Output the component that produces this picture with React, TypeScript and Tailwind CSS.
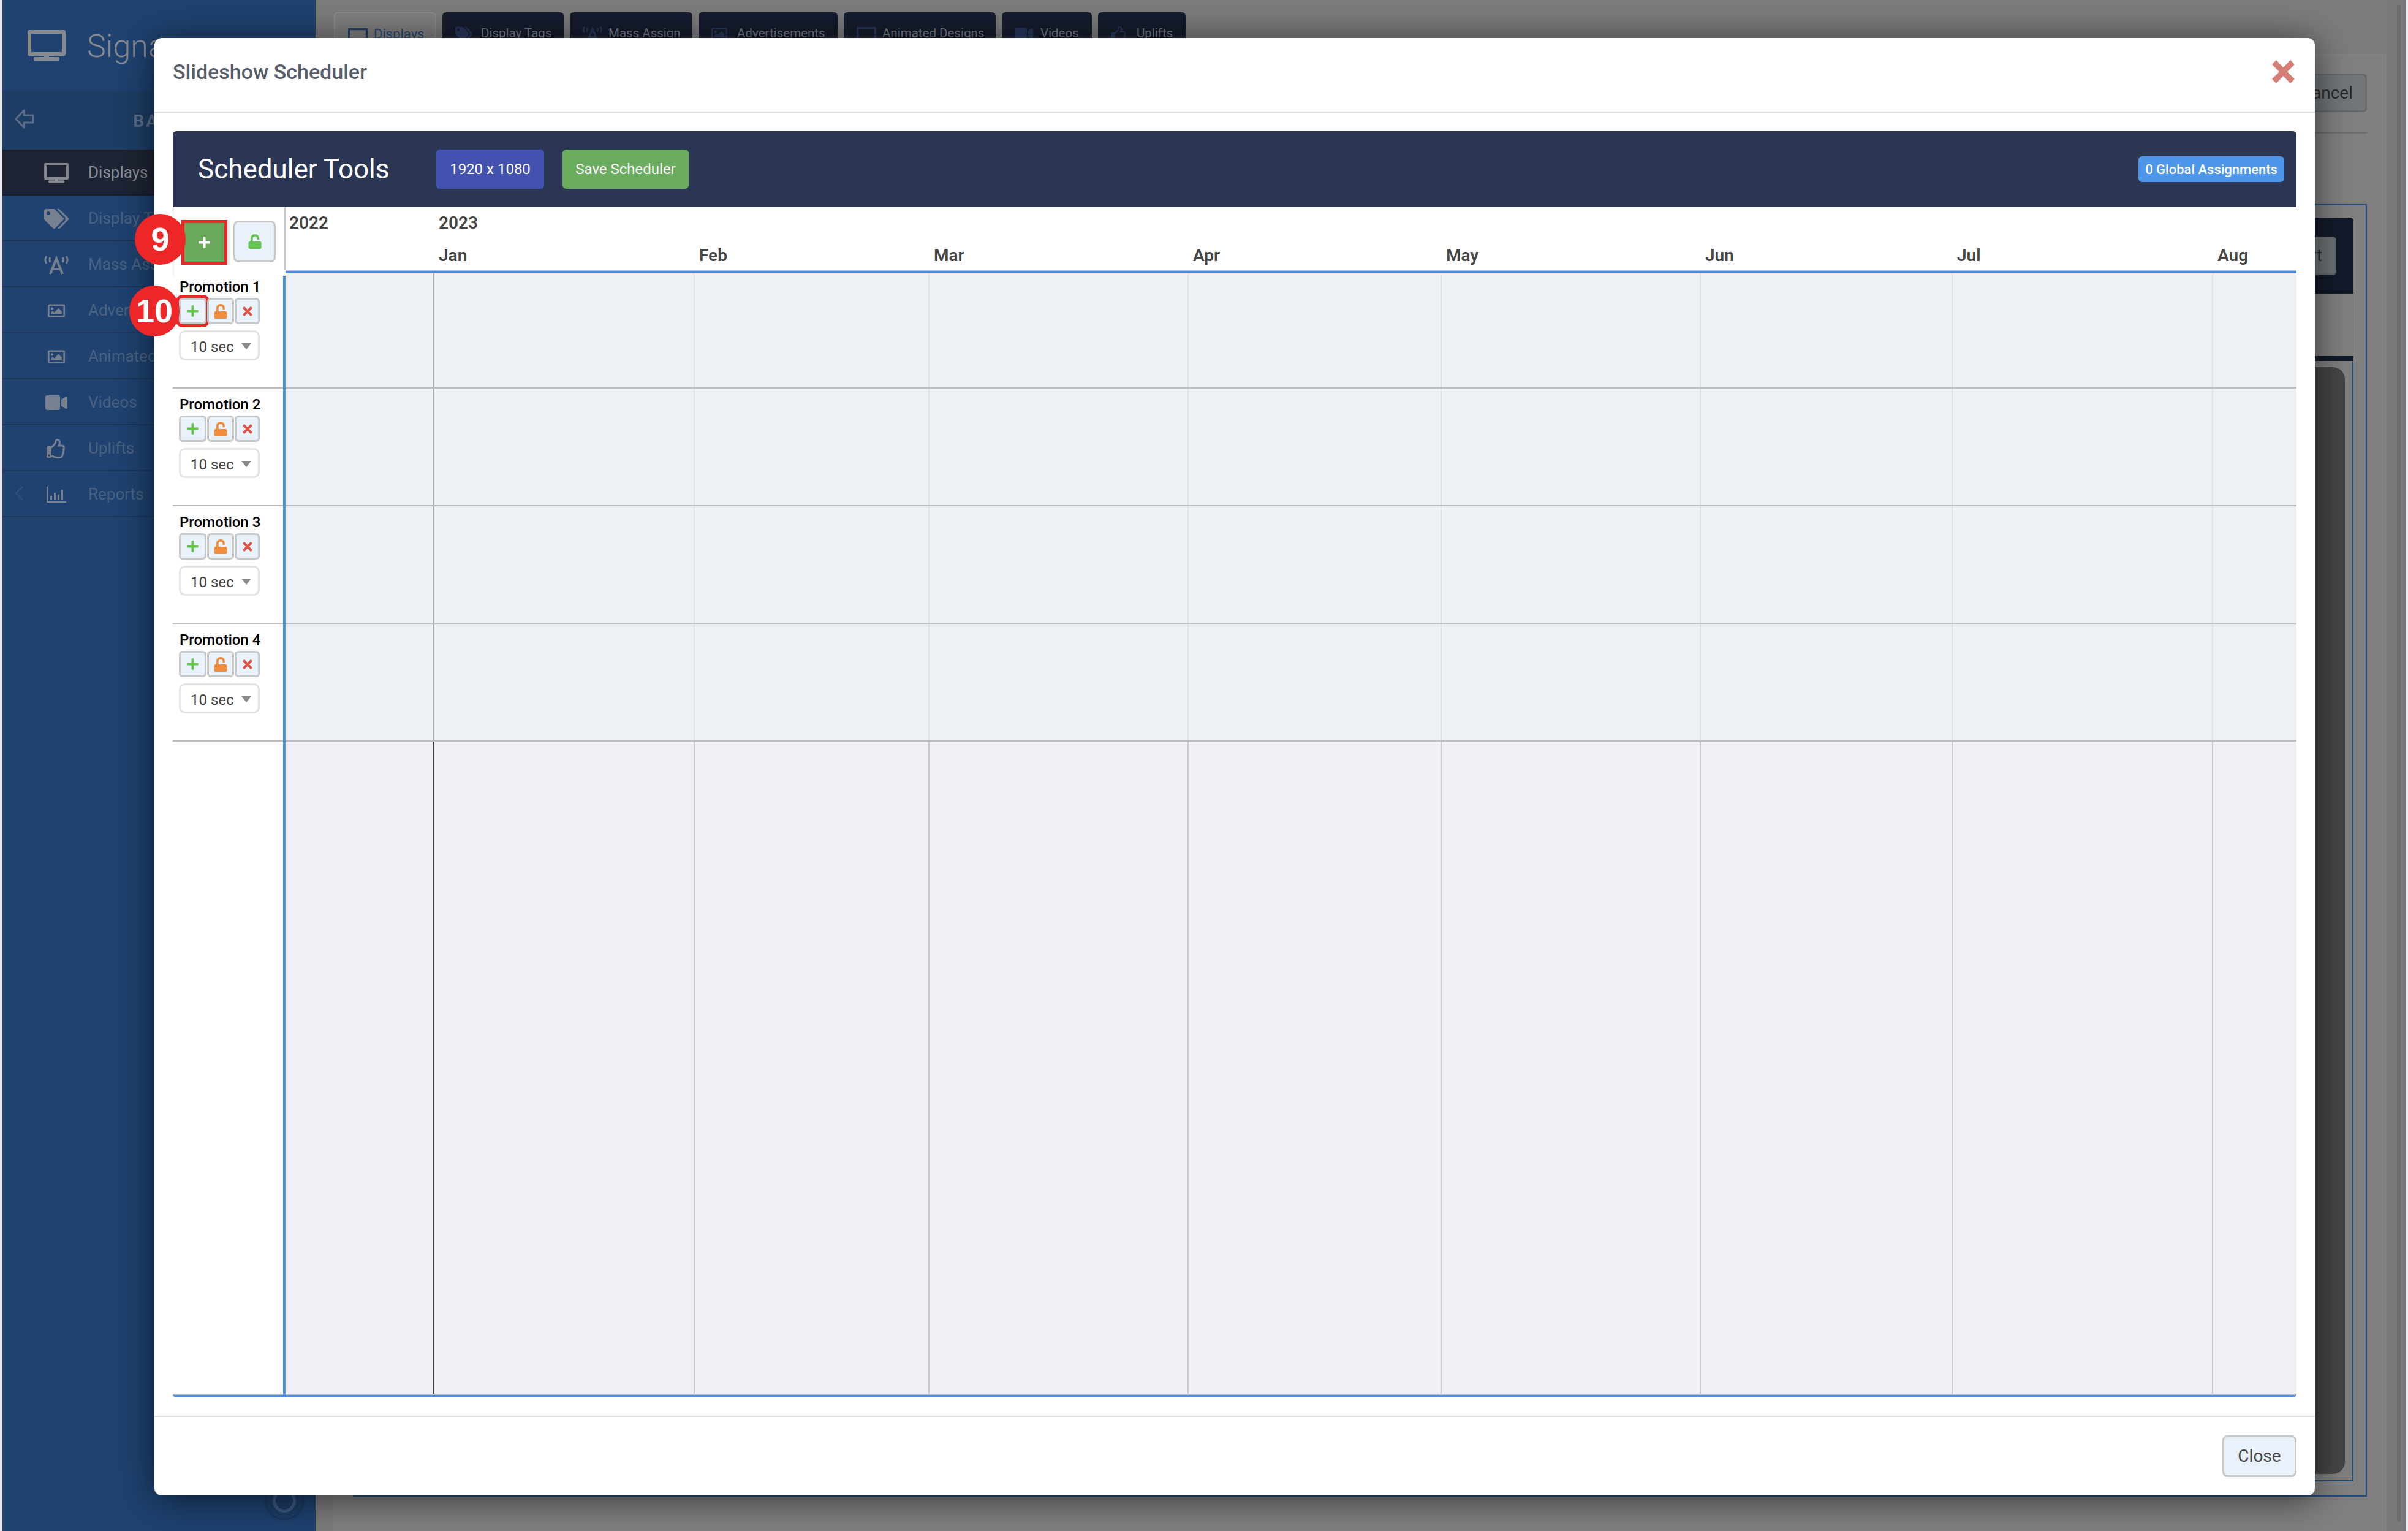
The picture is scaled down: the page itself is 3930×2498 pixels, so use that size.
import { FaPlus, FaUnlock, FaTimes, FaTags, FaRegImage, FaVideo, FaRegThumbsUp } from "react-icons/fa"

const gridCols = "grid grid-cols-[241px_425px_383px_423px_413px_423px_411px_425px_138px]"

const rows = [
  { name: "Promotion 1", leftH: "h-[184px]", rightH: "h-[188px]" },
  { name: "Promotion 2", leftH: "h-[192px]", rightH: "h-[192px]" },
  { name: "Promotion 3", leftH: "h-[192px]", rightH: "h-[192px]" },
  { name: "Promotion 4", leftH: "h-[192px]", rightH: "h-[192px]" },
]

const months = ["Jan", "Feb", "Mar", "Apr", "May", "Jun", "Jul", "Aug"]
const cells = [0, 1, 2, 3, 4, 5, 6, 7, 8]

function Monitor({ className }: { className?: string }) {
  return (
    <svg viewBox="0 0 62 50" className={className} fill="currentColor">
      <path fillRule="evenodd" d="M3 0h56a3 3 0 0 1 3 3v36a3 3 0 0 1-3 3H3a3 3 0 0 1-3-3V3a3 3 0 0 1 3-3zm3 6v30h50V6z" />
      <rect x="27" y="41" width="8" height="5" />
      <rect x="10" y="44" width="42" height="6" rx="3" />
    </svg>
  )
}

function Antenna({ className }: { className?: string }) {
  return (
    <svg viewBox="0 0 40 32" className={className} fill="none" stroke="currentColor">
      <path d="M4 2c-3 4-3 8 0 12M10 4c-1.500 2.500-1.500 5 0 8M36 2c3 4 3 8 0 12M30 4c1.500 2.500 1.500 5 0 8" strokeWidth="3" />
      <path d="M10 31l10-25 10 25M14 23h12" strokeWidth="4" />
    </svg>
  )
}

function BarChart({ className }: { className?: string }) {
  return (
    <svg viewBox="0 0 32 26" className={className} fill="currentColor">
      <path d="M0 0h2v24h30v2H0z" />
      <rect x="6" y="15" width="3" height="7" />
      <rect x="12" y="10" width="3" height="12" />
      <rect x="18" y="13" width="3" height="9" />
      <rect x="24" y="5" width="3" height="17" />
    </svg>
  )
}

const navItems = [
  { label: "Displays", icon: <Monitor className="w-[40px] h-[32px]" /> },
  { label: "Display Tags", icon: <FaTags className="w-[40px] h-[32px]" /> },
  { label: "Mass Assign", icon: <Antenna className="w-[40px] h-[32px]" /> },
  { label: "Advertisements", icon: <FaRegImage className="w-[32px] h-[28px] mx-[4px]" /> },
  { label: "Animated Designs", icon: <FaRegImage className="w-[32px] h-[28px] mx-[4px]" /> },
  { label: "Videos", icon: <FaVideo className="w-[36px] h-[32px] mx-[2px]" /> },
  { label: "Uplifts", icon: <FaRegThumbsUp className="w-[32px] h-[32px] mx-[4px]" /> },
  { label: "Reports", icon: <BarChart className="w-[32px] h-[26px] mx-[4px]" /> },
]

const tabs = [
  { label: "Displays", w: "w-[167px]", icon: <Monitor className="w-[32px] h-[32px]" /> },
  { label: "Display Tags", w: "w-[198px]", icon: <FaTags className="w-[28px] h-[28px]" /> },
  { label: "Mass Assign", w: "w-[200px]", icon: <Antenna className="w-[32px] h-[28px]" /> },
  { label: "Advertisements", w: "w-[227px]", icon: <FaRegImage className="w-[26px] h-[28px]" /> },
  { label: "Animated Designs", w: "w-[248px]", icon: <Monitor className="w-[32px] h-[32px]" /> },
  { label: "Videos", w: "w-[147px]", icon: <FaVideo className="w-[30px] h-[28px]" /> },
  { label: "Uplifts", w: "w-[143px]", icon: <FaRegThumbsUp className="w-[26px] h-[30px]" /> },
]

function Sidebar() {
  return (
    <div className="relative w-[511px] shrink-0 bg-[#1f4270] flex flex-col">
      <div className="h-[148px] flex items-center pl-[41px] gap-[35px] text-[#868a8e]">
        <Monitor className="w-[62px] h-[50px]" />
        <span className="pt-[3px] text-[52px] font-light">Signage</span>
      </div>
      <div className="relative h-[96px] pt-[3px] bg-[#1d3d64] flex items-center justify-center text-[#5d6f88] text-[28px] font-bold tracking-[3px]">
        <svg viewBox="0 0 32 32" className="absolute left-[20px] top-[30px] w-[32px] h-[32px]" fill="none" stroke="currentColor" strokeWidth="3" strokeLinejoin="round">
          <path d="M2 16L15 2v8h15v12H15v8z" />
        </svg>
        BACK
      </div>
      {navItems.map((item, i) => (
        <div
          key={item.label}
          className={`relative h-[75px] flex items-center pl-[68px] pt-[2px] gap-[32px] border-b-2 text-[26px] ${
            i === 0 ? "bg-[#1e2433] border-[#1a1f2c] text-[#8d9199]" : "border-[#1c3658] text-[#4a6180]"
          }`}
        >
          <span className={i === 0 ? "text-[#868a8e]" : "text-[#76808f]"}>{item.icon}</span>
          {item.label}
          {item.label === "Reports" && (
            <svg viewBox="0 0 14 24" className="absolute left-[20px] top-[24px] w-[14px] h-[24px] text-[#35527a]" fill="none" stroke="currentColor" strokeWidth="2">
              <path d="M13 1L2 12l11 11" />
            </svg>
          )}
        </div>
      ))}
      <div className="absolute left-[430px] top-[2420px] w-[60px] h-[58px] rounded-full bg-[#1d3d67] flex items-center justify-center shadow-[0_0_4px_rgba(0,0,0,0.5)]">
        <div className="w-[38px] h-[38px] rounded-full border-[5px] border-[#3d5a80]" />
      </div>
    </div>
  )
}

function BackgroundPage() {
  return (
    <div className="flex-1 flex min-w-0 bg-[#7c7c7c]">
      <div className="flex-1 flex flex-col pl-[30px] min-w-0">
        <div className="h-[88px] pt-[20px] flex gap-[10px] shrink-0">
          {tabs.map((tab, i) => (
            <div
              key={tab.label}
              className={`${tab.w} rounded-t-[6px] pl-[21px] pt-[21px] flex items-start leading-[26px] ${
                i === 0 ? "border-2 border-b-0 border-[#8c8c8c] bg-[#7f7f7f] text-[22px] text-[#24466f]" : "bg-[#161c2d] text-[20.5px] text-[#747986]"
              }`}
            >
              <span className={`w-[42px] shrink-0 ${i === 0 ? "text-[#1f3d66]" : "text-[#25365a]"}`}>{tab.icon}</span>
              {tab.label}
            </div>
          ))}
        </div>
        <div className="flex-1 flex flex-col border border-b-0 border-[#858585] bg-[#808080] px-[30px] pt-[31px] pb-[56px]">
          <div className="flex justify-end pb-[33px] border-b-2 border-[#6e6e6e]">
            <div className="h-[63px] px-[20px] flex items-center rounded-[6px] border-[3px] border-[#666a6d] bg-[#727679] text-[28px] text-[#2a2a2a]">
              Cancel
            </div>
          </div>
          <div className="mt-[115px] flex-1 flex flex-col border-2 border-[#234c78] px-[20px] pt-[20px] pb-[23px]">
            <div className="h-[124px] shrink-0 bg-[#131a2a] rounded-t-[6px] flex items-center justify-end pr-[28px]">
              <div className="h-[63px] px-[20px] flex items-center rounded-[6px] border-[3px] border-[#666a6d] bg-[#6e7376] text-[28px] text-[#2a2a2a]">
                Start
              </div>
            </div>
            <div className="h-[102px] shrink-0 border-r border-[#6e6e6e]" />
            <div className="h-[8px] shrink-0 bg-[#131a2a]" />
            <div className="flex-1 flex border-r-2 border-[#234c78] border-b-2 pr-[12px] pt-[10px] pb-[10px]">
              <div className="flex-1 rounded-[20px] bg-[#464646]" />
            </div>
          </div>
        </div>
      </div>
      <div className="w-[32px] shrink-0 pt-[8px] pb-[15px] pl-[18px] pr-[8px] bg-[#7a7a7c]">
        <div className="h-full bg-[#6e6e6e]" />
      </div>
    </div>
  )
}

function Badge({ value, className }: { value: string; className: string }) {
  return (
    <div className={`absolute z-10 rounded-full bg-[#ed2628] flex items-center justify-center text-white font-['Liberation_Sans',sans-serif] font-bold text-[54px] ${className}`}>
      {value}
    </div>
  )
}

function PromotionControls({ name, highlight }: { name: string; highlight: boolean }) {
  const btn = "flex items-center justify-center h-[43px] rounded-[6px] border-[3px] border-[#c8c8c8] bg-[#e9f1fb]"
  return (
    <div className="relative pl-[10px]">
      {highlight && <Badge value="10" className="left-[-71px] top-[10px] w-[82px] h-[83px]" />}
      <div className="pl-[1px] text-[24px] leading-[24px] font-medium text-black whitespace-nowrap">{name}</div>
      <div className="mt-[6px] flex gap-[1px]">
        <div className={`${btn} w-[45px] ${highlight ? "outline-[5px] outline-[#ed2628]" : ""}`}>
          <FaPlus className="w-[21px] h-[21px] text-[#66c552]" />
        </div>
        <div className={`${btn} w-[44px]`}>
          <FaUnlock className="w-[22px] h-[24px] text-[#f08c3c]" />
        </div>
        <div className={`${btn} w-[41px]`}>
          <FaTimes className="w-[20px] h-[22px] text-[#e34f42]" />
        </div>
      </div>
      <div className="mt-[10px] w-[132px] h-[49px] pl-[16px] pr-[11px] flex items-center justify-between rounded-[10px] border-[3px] border-[#e3e3e3] bg-white text-[24px] text-[#444444]">
        <span className="pt-[4px]">10 sec</span>
        <svg viewBox="0 0 16 10" className="mt-[2px] w-[16px] h-[10px] text-[#888888]" fill="currentColor">
          <path d="M0 0h16L8 10z" />
        </svg>
      </div>
    </div>
  )
}

function MonthCells({ filler }: { filler: boolean }) {
  return (
    <>
      {cells.map((c) => {
        let line = ""
        if (c === 1) line = filler ? "border-l-2 border-[#3f3f3f]" : "border-l-2 border-[#a8a9ab]"
        if (c > 1) line = filler ? "border-l-2 border-[#c9cacd]" : "border-l-2 border-[#dfe2e6]"
        return <div key={c} className={line} />
      })}
    </>
  )
}

function Timeline() {
  return (
    <div className="flex-1 flex border-b-4 border-[#4e8fdb] rounded-b-[6px] min-h-0">
      <div className="w-[184px] shrink-0 flex flex-col">
        <div className="relative h-[112px] shrink-0 pl-[12px] pt-[21px] flex items-start gap-[10px] border-l-2 border-l-[#f0f2f6]">
          <Badge value="9" className="left-[-64px] top-[11px] w-[83px] h-[83px]" />
          <div className="w-[75px] h-[73px] flex items-center justify-center border-[5px] border-[#ed2628] bg-[#6aa95c]">
            <FaPlus className="w-[21px] h-[21px] text-white" />
          </div>
          <div className="mt-[1px] w-[69px] h-[68px] flex items-center justify-center rounded-[8px] border-[3px] border-[#c8c8c8] bg-[#e9f1fb]">
            <FaUnlock className="w-[22px] h-[24px] text-[#66c552]" />
          </div>
          <div className="absolute right-0 top-0 h-[102px] w-[2px] bg-[#c8c8c8]" />
        </div>
        <div className="flex-1 flex flex-col border-r-4 border-[#4e8fdb]">
          {rows.map((row, i) => (
            <div key={row.name} className={`${row.leftH} shrink-0 flex flex-col justify-end pb-[44px] border-b-2 border-[#bdbdc0]`}>
              <PromotionControls name={row.name} highlight={i === 0} />
            </div>
          ))}
          <div className="flex-1 border-b-2 border-[#bdbdc0]" />
        </div>
      </div>
      <div className="flex-1 flex flex-col min-w-0">
        <div className="h-[108px] shrink-0 border-b-4 border-[#4e8fdb]">
          <div className="h-[104px] border-b-2 border-[#bdbdc0] text-[28px] font-semibold text-[#444444]">
            <div className={`${gridCols} h-[52px] items-center`}>
              <div className="pl-[6px]">2022</div>
              <div className="pl-[9px]">2023</div>
            </div>
            <div className={`${gridCols} h-[50px] pt-[3px] items-center`}>
              <div />
              {months.map((m) => (
                <div key={m} className="pl-[9px]">{m}</div>
              ))}
            </div>
          </div>
        </div>
        {rows.map((row) => (
          <div key={row.name} className={`${gridCols} ${row.rightH} shrink-0 bg-[#edf0f5] border-b-2 border-[#bdbdc0]`}>
            <MonthCells filler={false} />
          </div>
        ))}
        <div className={`${gridCols} flex-1 bg-[#eff0f6] border-b-2 border-[#bdbdc0]`}>
          <MonthCells filler={true} />
        </div>
      </div>
    </div>
  )
}

function SchedulerModal() {
  return (
    <div className="absolute left-[252px] top-[62px] w-[3526px] h-[2378px] flex flex-col rounded-[12px] bg-white shadow-[0_6px_60px_rgba(0,0,0,0.6)]">
      {/* Header */}
      <div className="h-[122px] shrink-0 flex items-center justify-between pl-[30px] pr-[33px] pb-[10px] border-b-2 border-[#e3e3e3]">
        <h1 className="text-[34px] font-medium text-[#565c68]">Slideshow Scheduler</h1>
        <svg viewBox="0 0 37 38" className="w-[37px] h-[38px] text-[#d47e75]" fill="currentColor">
          <path d="M7 0l11.500 12L30 0l7 7-12 12 12 12-7 7-11.500-12L7 38l-7-7 12-12L0 7z" />
        </svg>
      </div>

      {/* Body */}
      <div className="flex-1 flex flex-col min-h-0 px-[30px] pt-[30px] pb-[30px]">
        <div className="h-[124px] shrink-0 flex items-center pl-[41px] pr-[20px] rounded-t-[6px] bg-[#2b3655]">
          <span className="w-[389px] text-[44px] text-white">Scheduler Tools</span>
          <div className="w-[176px] h-[64px] flex items-center justify-center rounded-[6px] bg-[#4352ae] text-[24px] text-white">
            1920 x 1080
          </div>
          <div className="ml-[30px] w-[206px] h-[64px] flex items-center justify-center rounded-[6px] bg-[#6aac5e] text-[24px] text-white">
            Save Scheduler
          </div>
          <div className="ml-auto w-[238px] h-[42px] flex items-center justify-center rounded-[6px] bg-[#4d96ea] text-[22px] font-medium text-white">
            0 Global Assignments
          </div>
        </div>
        <Timeline />
      </div>

      {/* Footer */}
      <div className="h-[130px] shrink-0 flex justify-end items-start px-[30px] pt-[30px] border-t-2 border-[#e3e3e3]">
        <div className="w-[121px] h-[68px] flex items-center justify-center rounded-[8px] border-[3px] border-[#c8c8c8] bg-[#e9f1fb] text-[28px] text-[#444444]">
          Close
        </div>
      </div>
    </div>
  )
}

export default function App() {
  return (
    <div className="relative w-[3930px] h-[2498px] overflow-hidden flex font-['Roboto',sans-serif]">
      <div className="w-[4px] shrink-0 bg-[#e9e9ef]" />
      <Sidebar />
      <BackgroundPage />
      <div className="w-[4px] shrink-0 bg-[#eeeff3]" />
      <SchedulerModal />
    </div>
  )
}
